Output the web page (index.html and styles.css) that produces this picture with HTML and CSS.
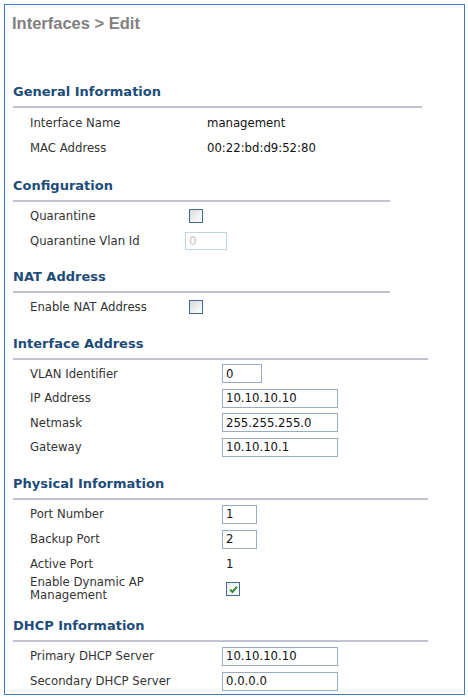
FILE: index.html
```
<!DOCTYPE html>
<html>
<head>
<meta charset="utf-8">
<title>Interfaces &gt; Edit</title>
<link rel="stylesheet" href="styles.css">
</head>
<body>
<div class="panel">
  <h1 class="page-title">Interfaces &gt; Edit</h1>

  <section class="section general">
    <h2 class="section-title">General Information</h2>
    <div class="rows">
      <div class="row"><span class="label">Interface Name</span><span class="value">management</span></div>
      <div class="row"><span class="label">MAC Address</span><span class="value">00:22:bd:d9:52:80</span></div>
    </div>
  </section>

  <section class="section config">
    <h2 class="section-title">Configuration</h2>
    <div class="rows">
      <div class="row"><span class="label">Quarantine</span><span class="checkbox"></span></div>
      <div class="row"><span class="label">Quarantine Vlan Id</span><input class="field field-vlanid" type="text" value="0" disabled></div>
    </div>
  </section>

  <section class="section nat">
    <h2 class="section-title">NAT Address</h2>
    <div class="rows">
      <div class="row"><span class="label">Enable NAT Address</span><span class="checkbox"></span></div>
    </div>
  </section>

  <section class="section iface">
    <h2 class="section-title">Interface Address</h2>
    <div class="rows">
      <div class="row"><span class="label">VLAN Identifier</span><input class="field field-sm" type="text" value="0"></div>
      <div class="row"><span class="label">IP Address</span><input class="field field-lg" type="text" value="10.10.10.10"></div>
      <div class="row"><span class="label">Netmask</span><input class="field field-lg" type="text" value="255.255.255.0"></div>
      <div class="row"><span class="label">Gateway</span><input class="field field-lg" type="text" value="10.10.10.1"></div>
    </div>
  </section>

  <section class="section physical">
    <h2 class="section-title">Physical Information</h2>
    <div class="rows">
      <div class="row"><span class="label">Port Number</span><input class="field field-xs" type="text" value="1"></div>
      <div class="row"><span class="label">Backup Port</span><input class="field field-xs" type="text" value="2"></div>
      <div class="row"><span class="label">Active Port</span><span class="value indent">1</span></div>
      <div class="row"><span class="label two-line">Enable Dynamic AP<br>Management</span><span class="checkbox checked"><svg viewBox="0 0 11 11" width="11" height="11"><path d="M2.2 5.6 L4.4 7.9 L8.9 2.8" fill="none" stroke="#2f8a35" stroke-width="2"/></svg></span></div>
    </div>
  </section>

  <section class="section dhcp">
    <h2 class="section-title">DHCP Information</h2>
    <div class="rows">
      <div class="row"><span class="label">Primary DHCP Server</span><input class="field field-lg" type="text" value="10.10.10.10"></div>
      <div class="row"><span class="label">Secondary DHCP Server</span><input class="field field-lg" type="text" value="0.0.0.0"></div>
    </div>
  </section>
</div>
</body>
</html>
```
FILE: styles.css
```
html, body {
  margin: 0;
  padding: 0;
  background: #ffffff;
}

body {
  font-family: "DejaVu Sans", Verdana, sans-serif;
  font-size: 11.7px;
  color: #333333;
}

.panel {
  box-sizing: border-box;
  margin: 4px 0 0 4px;
  width: 461px;
  height: 691px;
  border: 1px solid #3d7dbf;
  padding: 0;
}

.page-title {
  margin: 8px 0 51px 7px;
  font-family: "Liberation Sans", Arial, sans-serif;
  font-size: 16.5px;
  line-height: 20px;
  font-weight: bold;
  color: #808080;
}

.section {
  margin: 0 0 16px 8px;
}

.general {
  margin-bottom: 18px;
}

.section-title {
  margin: 0;
  font-family: "DejaVu Sans", Verdana, sans-serif;
  font-size: 13px;
  line-height: 16px;
  font-weight: bold;
  color: #1d4c7a;
  padding-bottom: 6px;
  border-bottom: 2px solid #bfc2d2;
}

.general .section-title { width: 409px; }
.config .section-title,
.nat .section-title { width: 377px; }
.iface .section-title,
.physical .section-title,
.dhcp .section-title { width: 415px; }

.rows {
  margin-top: 2px;
  display: flex;
  flex-direction: column;
}

.general .rows { margin-top: 3px; }

.row {
  display: flex;
  align-items: center;
  height: 24.5px;
  padding-left: 17px;
}

.physical .row,
.dhcp .row { height: 25px; }

.label {
  flex-shrink: 0;
  color: #333333;
}

.general .label { width: 177px; }
.config .label,
.nat .label { width: 155px; }
.iface .label,
.physical .label,
.dhcp .label { width: 192px; }

.two-line {
  line-height: 13.5px;
}

.value {
  color: #111111;
}

.indent {
  margin-left: 4px;
}

.field {
  box-sizing: border-box;
  height: 19px;
  margin: 0;
  padding: 0 3px;
  border: 1px solid #98adc4;
  border-radius: 0;
  background: #ffffff;
  font-family: "DejaVu Sans", Verdana, sans-serif;
  font-size: 11.7px;
  color: #111111;
  outline: none;
}

.field-xs { width: 35px; }
.field-sm { width: 40px; }
.field-lg { width: 116px; }

.field-vlanid {
  width: 42px;
  height: 18px;
  border-color: #c3d2e2;
  color: #c4c4c4;
  background: #ffffff;
}

.checkbox {
  box-sizing: border-box;
  width: 14px;
  height: 14px;
  margin-left: 4px;
  border: 1px solid #3f6b99;
  background: linear-gradient(135deg, #d8d8d8 0%, #f2f2f2 60%, #fcfcfc 100%);
  display: flex;
  align-items: center;
  justify-content: center;
}

.checkbox.checked {
  background: linear-gradient(135deg, #ececec 0%, #fbfbfb 100%);
}

.checkbox svg {
  display: block;
}
```
